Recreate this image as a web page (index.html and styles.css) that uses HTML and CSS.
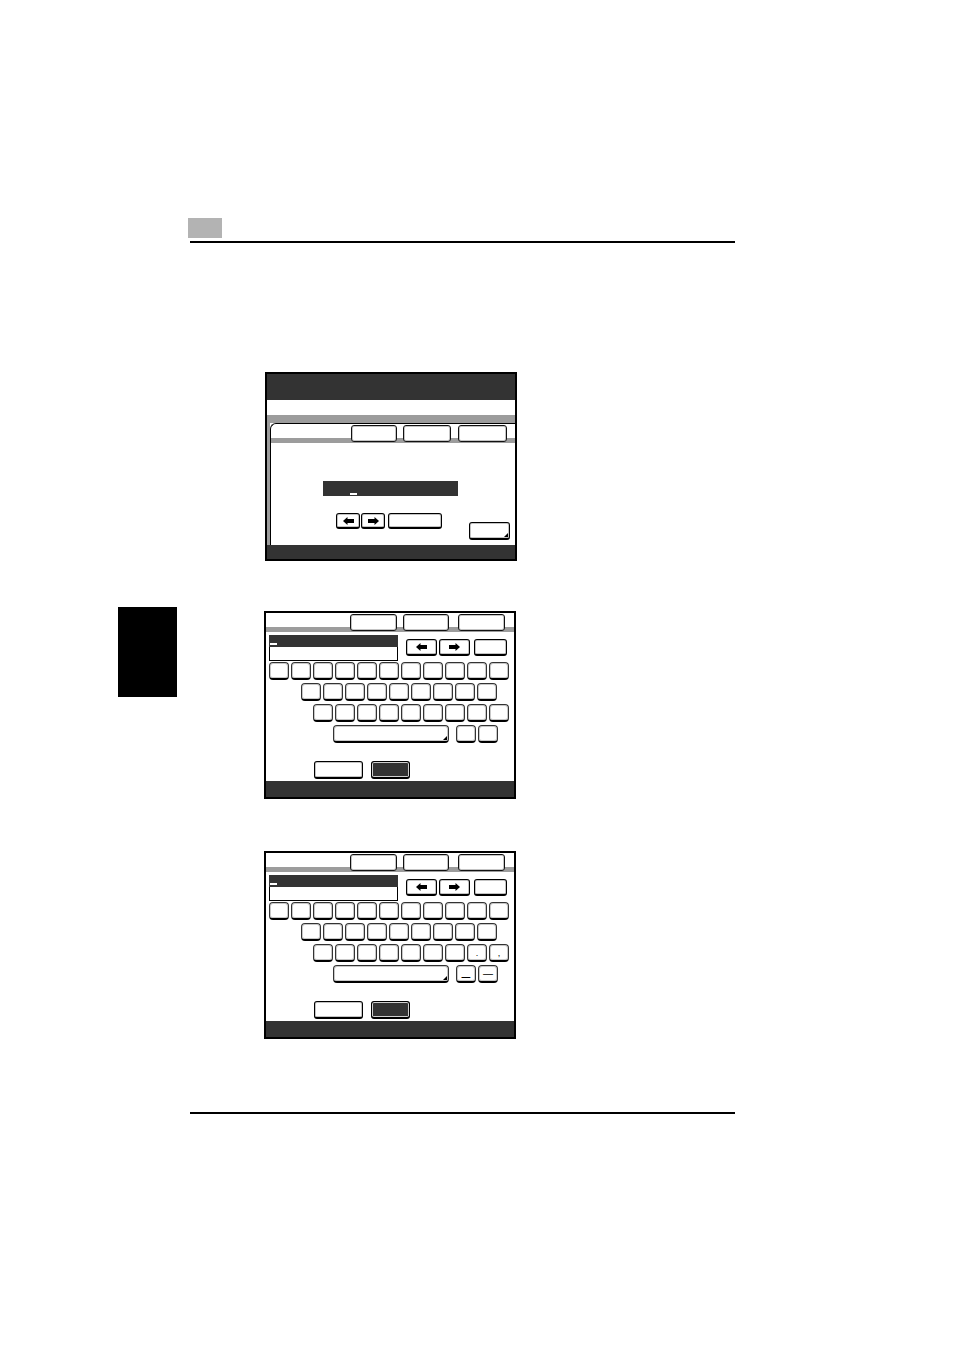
FILE: index.html
```html
<!DOCTYPE html>
<html>
<head>
<meta charset="utf-8">
<link rel="stylesheet" href="styles.css">
</head>
<body>
<div class="page">
  <div class="runhead">
    <div class="chapbox"></div>
    <div class="rule"></div>
  </div>

  <div class="main">
    <div class="tabcol"><div class="thumb"></div></div>

    <div class="screens">
      <!-- Screen 1 -->
      <div class="screen s1">
        <div class="s1-head"></div>
        <div class="s1-white"></div>
        <div class="s1-band"></div>
        <div class="s1-body">
          <div class="s1-strip"></div>
          <div class="panel">
            <div class="tabbar p1">
              <div class="tbtn w46"></div>
              <div class="tbtn w48 g6"></div>
              <div class="tbtn w49 g7"></div>
            </div>
            <div class="field1"><span class="cursor"></span></div>
            <div class="ctrl1">
              <div class="abtn a24"><svg width="11" height="8" viewBox="0 0 11 8"><path d="M0 4 L4.5 0 L4.5 2 L11 2 L11 6 L4.5 6 L4.5 8 Z"/></svg></div>
              <div class="abtn a24 g1"><svg width="11" height="8" viewBox="0 0 11 8"><path d="M11 4 L6.5 0 L6.5 2 L0 2 L0 6 L6.5 6 L6.5 8 Z"/></svg></div>
              <div class="abtn a54 g3"></div>
              <div class="okbtn ear"></div>
            </div>
          </div>
        </div>
        <div class="s1-foot"></div>
      </div>

      <!-- Screen 2 -->
      <div class="screen kb k2">
        <div class="tabbar p2">
          <div class="tbtn w47"></div>
          <div class="tbtn w46 g6"></div>
          <div class="tbtn w47 g9"></div>
        </div>
        <div class="inrow">
          <div class="input">
            <div class="input-dark"><span class="cursor"></span></div>
            <div class="input-white"></div>
          </div>
          <div class="abtn b31 m8"><svg width="11" height="8" viewBox="0 0 11 8"><path d="M0 4 L4.5 0 L4.5 2 L11 2 L11 6 L4.5 6 L4.5 8 Z"/></svg></div>
          <div class="abtn b31 g2"><svg width="11" height="8" viewBox="0 0 11 8"><path d="M11 4 L6.5 0 L6.5 2 L0 2 L0 6 L6.5 6 L6.5 8 Z"/></svg></div>
          <div class="abtn b33 g4"></div>
        </div>
        <div class="krow r1">
          <div class="key"></div><div class="key"></div><div class="key"></div><div class="key"></div><div class="key"></div><div class="key"></div><div class="key"></div><div class="key"></div><div class="key"></div><div class="key"></div><div class="key"></div>
        </div>
        <div class="krow r2">
          <div class="key"></div><div class="key"></div><div class="key"></div><div class="key"></div><div class="key"></div><div class="key"></div><div class="key"></div><div class="key"></div><div class="key"></div>
        </div>
        <div class="krow r3">
          <div class="key"></div><div class="key"></div><div class="key"></div><div class="key"></div><div class="key"></div><div class="key"></div><div class="key"></div><div class="key"></div><div class="key"></div>
        </div>
        <div class="krow r4">
          <div class="key space ear"></div>
          <div class="key sm1"></div><div class="key"></div>
        </div>
        <div class="brow">
          <div class="bbtn"></div>
          <div class="bbtn dark"></div>
        </div>
        <div class="kfoot"></div>
      </div>

      <!-- Screen 3 -->
      <div class="screen kb k3">
        <div class="tabbar p2">
          <div class="tbtn w47"></div>
          <div class="tbtn w46 g6"></div>
          <div class="tbtn w47 g9"></div>
        </div>
        <div class="inrow">
          <div class="input">
            <div class="input-dark"><span class="cursor"></span></div>
            <div class="input-white"></div>
          </div>
          <div class="abtn b31 m8"><svg width="11" height="8" viewBox="0 0 11 8"><path d="M0 4 L4.5 0 L4.5 2 L11 2 L11 6 L4.5 6 L4.5 8 Z"/></svg></div>
          <div class="abtn b31 g2"><svg width="11" height="8" viewBox="0 0 11 8"><path d="M11 4 L6.5 0 L6.5 2 L0 2 L0 6 L6.5 6 L6.5 8 Z"/></svg></div>
          <div class="abtn b33 g4"></div>
        </div>
        <div class="krow r1">
          <div class="key"></div><div class="key"></div><div class="key"></div><div class="key"></div><div class="key"></div><div class="key"></div><div class="key"></div><div class="key"></div><div class="key"></div><div class="key"></div><div class="key"></div>
        </div>
        <div class="krow r2">
          <div class="key"></div><div class="key"></div><div class="key"></div><div class="key"></div><div class="key"></div><div class="key"></div><div class="key"></div><div class="key"></div><div class="key"></div>
        </div>
        <div class="krow r3">
          <div class="key"></div><div class="key"></div><div class="key"></div><div class="key"></div><div class="key"></div><div class="key"></div><div class="key"></div><div class="key lbl">.</div><div class="key lbl">,</div>
        </div>
        <div class="krow r4">
          <div class="key space ear"></div>
          <div class="key sm1 lbl under">_</div><div class="key lbl mid">—</div>
        </div>
        <div class="brow">
          <div class="bbtn"></div>
          <div class="bbtn dark"></div>
        </div>
        <div class="kfoot"></div>
      </div>
    </div>
  </div>

  <div class="footrule"></div>
</div>
</body>
</html>
```

FILE: styles.css
```css
* { box-sizing: border-box; }
html, body { margin: 0; padding: 0; background: #fff; }
body { width: 954px; height: 1350px; font-family: "Liberation Sans", Arial, sans-serif; overflow: hidden; }

.page { padding-top: 218px; }

.runhead { margin-left: 188px; width: 547px; }
.chapbox { width: 34px; height: 20px; background: #b3b3b3; }
.rule { margin-left: 2px; margin-top: 3px; height: 2px; width: 545px; background: #000; }

.main { display: flex; margin-top: 129px; }
.tabcol { width: 59px; margin-left: 118px; padding-top: 235px; }
.thumb { width: 59px; height: 90px; background: #000; }

.screens { margin-left: 87px; display: flex; flex-direction: column; }

.screen { border: 2px solid #000; background: #fff; width: 252px; }

/* Screen 1 */
.s1 { margin-left: 1px; height: 189px; display: flex; flex-direction: column; }
.s1-head { height: 26px; background: #333; }
.s1-white { height: 15px; background: #fff; }
.s1-band { height: 8px; background: #9c9c9c; }
.s1-body { height: 122px; display: flex; background: #fff; }
.s1-strip { width: 3px; background: #9c9c9c; }
.panel { flex: 1; border-top: 1px solid #000; border-left: 1px solid #000; border-top-left-radius: 6px; overflow: hidden; }
.s1-foot { height: 14px; background: #333; }

.tabbar { display: flex; align-items: flex-start; height: 19px;
  background: linear-gradient(to bottom, transparent 0, transparent 14px, #9c9c9c 14px, #9c9c9c 19px); }
.tabbar.p1 { padding-left: 80px; }
.tabbar.p2 { padding-left: 84px; }

.tbtn { height: 17px; margin-top: 1px; background: #fff; border: 1px solid #111; border-radius: 3px;
  box-shadow: inset 0 0 0 1px #c4c4c4; }
.w46 { width: 46px; } .w47 { width: 47px; } .w48 { width: 48px; } .w49 { width: 49px; }
.g1 { margin-left: 1px; } .g2 { margin-left: 2px; } .g3 { margin-left: 3px; } .g4 { margin-left: 4px; }
.g6 { margin-left: 6px; } .g7 { margin-left: 7px; } .g9 { margin-left: 9px; }
.m8 { margin-left: 8px; }

.field1 { margin-top: 38px; margin-left: 52px; width: 135px; height: 15px; background: #333;
  padding-left: 27px; padding-top: 12px; }
.cursor { display: block; width: 7px; height: 2px; background: #fff; }

.ctrl1 { display: flex; align-items: flex-start; margin-top: 17px; margin-left: 65px; }
.abtn { height: 16px; background: #fff; border: 1px solid #000; border-bottom-width: 2px; border-radius: 3px;
  box-shadow: inset 0 0 0 1px #c4c4c4; display: flex; align-items: center; justify-content: center; }
.abtn svg path { fill: #000; }
.a24 { width: 24px; }
.a54 { width: 54px; }
.okbtn { width: 41px; height: 18px; margin-left: 27px; margin-top: 9px; background: #fff;
  border: 1px solid #000; border-bottom-width: 2px; border-radius: 3px; box-shadow: inset 0 0 0 1px #c4c4c4; }

.ear { position: relative; }
.ear::after { content: ""; position: absolute; right: 1px; bottom: 1px; width: 0; height: 0;
  border-left: 4px solid transparent; border-bottom: 4px solid #000; }

/* Keyboard screens */
.kb { height: 188px; display: flex; flex-direction: column; }
.k2 { margin-top: 50px; }
.k3 { margin-top: 52px; }

.inrow { display: flex; align-items: flex-start; margin-top: 3px; }
.input { margin-left: 3px; width: 129px; }
.input-dark { height: 12px; background: #333; padding-left: 1px; padding-top: 8px; }
.input-white { height: 14px; border: 1px solid #000; border-top: none; background: #fff; }
.inrow .abtn { height: 17px; margin-top: 4px; }
.b31 { width: 31px; }
.b33 { width: 33px; }

.krow { display: flex; gap: 2px; }
.r1 { margin-top: 1px; margin-left: 3px; }
.r2 { margin-top: 3px; margin-left: 35px; }
.r3 { margin-top: 3px; margin-left: 47px; }
.r4 { margin-top: 3px; margin-left: 67px; }

.key { width: 20px; height: 18px; background: #fff; border: 1px solid #333; border-bottom: 2px solid #000;
  border-radius: 4px; box-shadow: inset 0 0 0 1px #c8c8c8;
  font-size: 9px; line-height: 1; color: #000; text-align: center;
  display: flex; align-items: flex-end; justify-content: center; padding-bottom: 2px; }
.key.mid { align-items: center; padding-bottom: 0; font-size: 10px; }
.key.under { font-size: 15px; padding-bottom: 4px; }
.space { width: 116px; }
.sm1 { margin-left: 5px; }

.brow { display: flex; margin-top: 18px; margin-left: 48px; }
.bbtn { width: 49px; height: 18px; background: #fff; border: 1px solid #000; border-bottom-width: 2px;
  border-radius: 3px; box-shadow: inset 0 0 0 1px #c4c4c4; }
.bbtn.dark { width: 39px; margin-left: 8px; background: #333; box-shadow: inset 0 0 0 1px #d0d0d0; }

.kfoot { margin-top: auto; height: 16px; background: #333; }

.footrule { margin-left: 190px; margin-top: 73px; width: 545px; height: 2px; background: #000; }
```
